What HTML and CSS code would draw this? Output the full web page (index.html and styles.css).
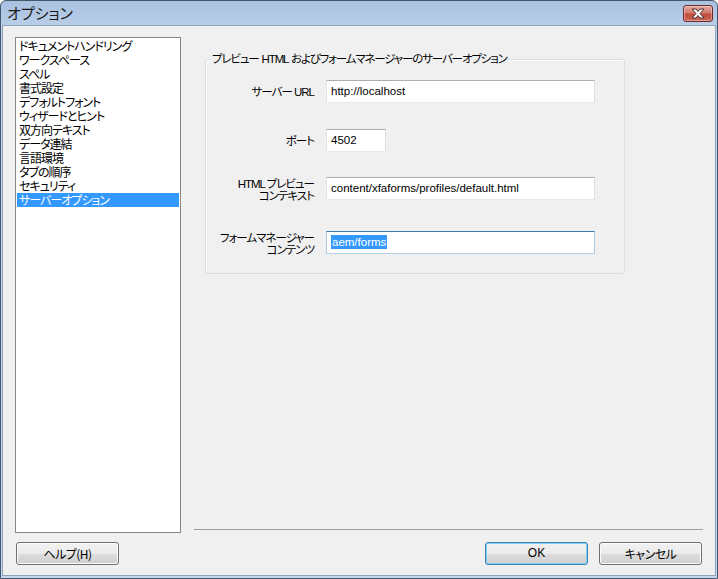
FILE: index.html
```html
<!DOCTYPE html>
<html lang="ja">
<head>
<meta charset="utf-8">
<title>オプション</title>
<link rel="stylesheet" href="styles.css">
</head>
<body>
<div class="window">
  <div class="titlebar">
    <span class="title">オプション</span>
    <div class="close-btn">
      <svg width="18" height="11" viewBox="0 0 18 11">
        <path d="M3 1 L7 1 L9 3.5 L11 1 L15 1 L11 5.5 L15 10 L11 10 L9 7.5 L7 10 L3 10 L7 5.5 Z" fill="#ffffff" stroke="#4a3030" stroke-width="1" stroke-linejoin="round"/>
      </svg>
    </div>
  </div>
  <div class="client">
    <div class="main">
      <ul class="list">
        <li>ドキュメントハンドリング</li>
        <li>ワークスペース</li>
        <li>スペル</li>
        <li>書式設定</li>
        <li>デフォルトフォント</li>
        <li>ウィザードとヒント</li>
        <li>双方向テキスト</li>
        <li>データ連結</li>
        <li>言語環境</li>
        <li>タブの順序</li>
        <li>セキュリティ</li>
        <li class="selected">サーバーオプション</li>
      </ul>
      <div class="panel">
        <div class="group">
          <span class="group-title">プレビュー HTML およびフォームマネージャーのサーバーオプション</span>
          <div class="row row-url">
            <label class="label">サーバー URL</label>
            <div class="input wide">http://localhost</div>
          </div>
          <div class="row row-port">
            <label class="label">ポート</label>
            <div class="input narrow">4502</div>
          </div>
          <div class="row row-two row-html">
            <label class="label">HTML プレビュー<br>コンテキスト</label>
            <div class="input wide">content/xfaforms/profiles/default.html</div>
          </div>
          <div class="row row-two row-fm">
            <label class="label">フォームマネージャー<br>コンテンツ</label>
            <div class="input wide focused"><span class="sel">aem/forms</span></div>
          </div>
        </div>
        <div class="separator"></div>
      </div>
    </div>
    <div class="buttons">
      <div class="btn help">ヘルプ(H)</div>
      <div class="spacer"></div>
      <div class="btn default">OK</div>
      <div class="btn cancel">キャンセル</div>
    </div>
  </div>
</div>
</body>
</html>
```

FILE: styles.css
```css
* { box-sizing: border-box; }
html, body { margin: 0; padding: 0; }
body {
  width: 718px;
  height: 579px;
  overflow: hidden;
  font-family: "Liberation Sans", "Noto Sans CJK JP", sans-serif;
  font-size: 12px;
  color: #000;
  font-feature-settings: "palt";
}
.window {
  width: 718px;
  height: 579px;
  border: 1px solid #44576c;
  border-radius: 6px 6px 0 0;
  background: linear-gradient(#a9c2e0, #c2d6ed 40px, #c3d7ee);
  padding: 0 1px 2px 1px;
  display: flex;
  flex-direction: column;
}
.titlebar {
  height: 24px;
  display: flex;
  align-items: flex-start;
}
.title {
  padding-left: 5px;
  line-height: 24px;
  font-family: "Noto Sans CJK JP", sans-serif;
  font-size: 15px;
  color: #1a1a1a;
}
.close-btn {
  margin-left: auto;
  margin-right: 3px;
  margin-top: 4px;
  width: 30px;
  height: 17px;
  border: 1px solid #6e2a2a;
  border-radius: 3px;
  background: linear-gradient(#e6a99f, #d27a6d 45%, #c14a3c 55%, #cc6a58);
  display: flex;
  align-items: center;
  justify-content: center;
  box-shadow: inset 0 0 0 1px rgba(255,255,255,0.35);
}
.close-btn svg { display: block; }
.client {
  flex: 1;
  border: 1px solid #8ea4bd;
  background: #f0f0f0;
  padding: 11px 12px 0 12px;
  display: flex;
  flex-direction: column;
}
.main {
  display: flex;
  height: 496px;
}
.list {
  list-style: none;
  margin: 0;
  width: 166px;
  height: 496px;
  border: 1px solid #828790;
  background: #fff;
  padding: 1px;
  font-family: "Noto Sans CJK JP", sans-serif;
  letter-spacing: -1px;
}
.list li {
  height: 14px;
  line-height: 14px;
  padding-left: 2px;
  white-space: nowrap;
}
.list li.selected {
  background: #3399ff;
  color: #fff;
}
.panel {
  flex: 1;
  margin-left: 13px;
  display: flex;
  flex-direction: column;
}
.group {
  position: relative;
  margin-left: 11px;
  margin-top: 22px;
  width: 420px;
  height: 215px;
  border: 1px solid #d5dfe5;
  border-radius: 3px;
  padding-top: 20px;
  box-shadow: inset 1px 1px 0 #fff;
}
.group-title {
  position: absolute;
  top: -9px;
  left: 5px;
  padding: 0 1px;
  background: #f0f0f0;
  line-height: 16px;
  white-space: nowrap;
  letter-spacing: -1.15px;
  word-spacing: 1px;
  font-size: 11.5px;
}
.row {
  display: flex;
  align-items: center;
}
.row-port { margin-top: 26px; }
.row-html { margin-top: 25px; }
.row-fm { margin-top: 29px; }
.row-two { align-items: flex-start; }
.label {
  width: 108px;
  margin-right: 12px;
  text-align: right;
  white-space: nowrap;
  line-height: 14px;
  letter-spacing: -1px;
  font-size: 11.5px;
}
.row-two .label {
  line-height: 12px;
  padding-top: 1px;
}
.input {
  height: 23px;
  background: #fff;
  border: 1px solid #e3e9ef;
  border-top-color: #abadb3;
  border-left-color: #e2e3ea;
  border-right-color: #dbdfe6;
  padding: 0 4px;
  line-height: 21px;
  font-size: 11.5px;
  white-space: nowrap;
}
.wide { width: 269px; }
.narrow { width: 60px; }
.input.focused {
  border-color: #b5cfe7;
  border-top-color: #3d7bad;
  border-left-color: #a4c9e3;
  border-right-color: #a4c9e3;
}
.sel {
  background: #3399ff;
  color: #fff;
  padding: 1px 1px;
}
.separator {
  margin-top: auto;
  margin-bottom: 3px;
  height: 1px;
  background: #a0a0a0;
}
.buttons {
  display: flex;
  margin-top: 9px;
}
.spacer { flex: 1; }
.btn {
  width: 103px;
  height: 23px;
  border: 1px solid #707070;
  border-radius: 3px;
  background: linear-gradient(#f2f2f2, #ebebeb 50%, #dddddd 50%, #cfcfcf);
  box-shadow: inset 0 0 0 1px #fcfcfc;
  text-align: center;
  line-height: 21px;
  font-family: "Noto Sans CJK JP", sans-serif;
  font-size: 12px;
  letter-spacing: -0.5px;
}
.help { margin-left: 1px; }
.default {
  border-color: #3c7fb1;
  box-shadow: inset 0 0 0 1px #7fd1f5;
  font-family: "Liberation Sans", sans-serif;
  letter-spacing: 0;
}
.cancel {
  margin-left: 11px;
  margin-right: 1px;
}
```
